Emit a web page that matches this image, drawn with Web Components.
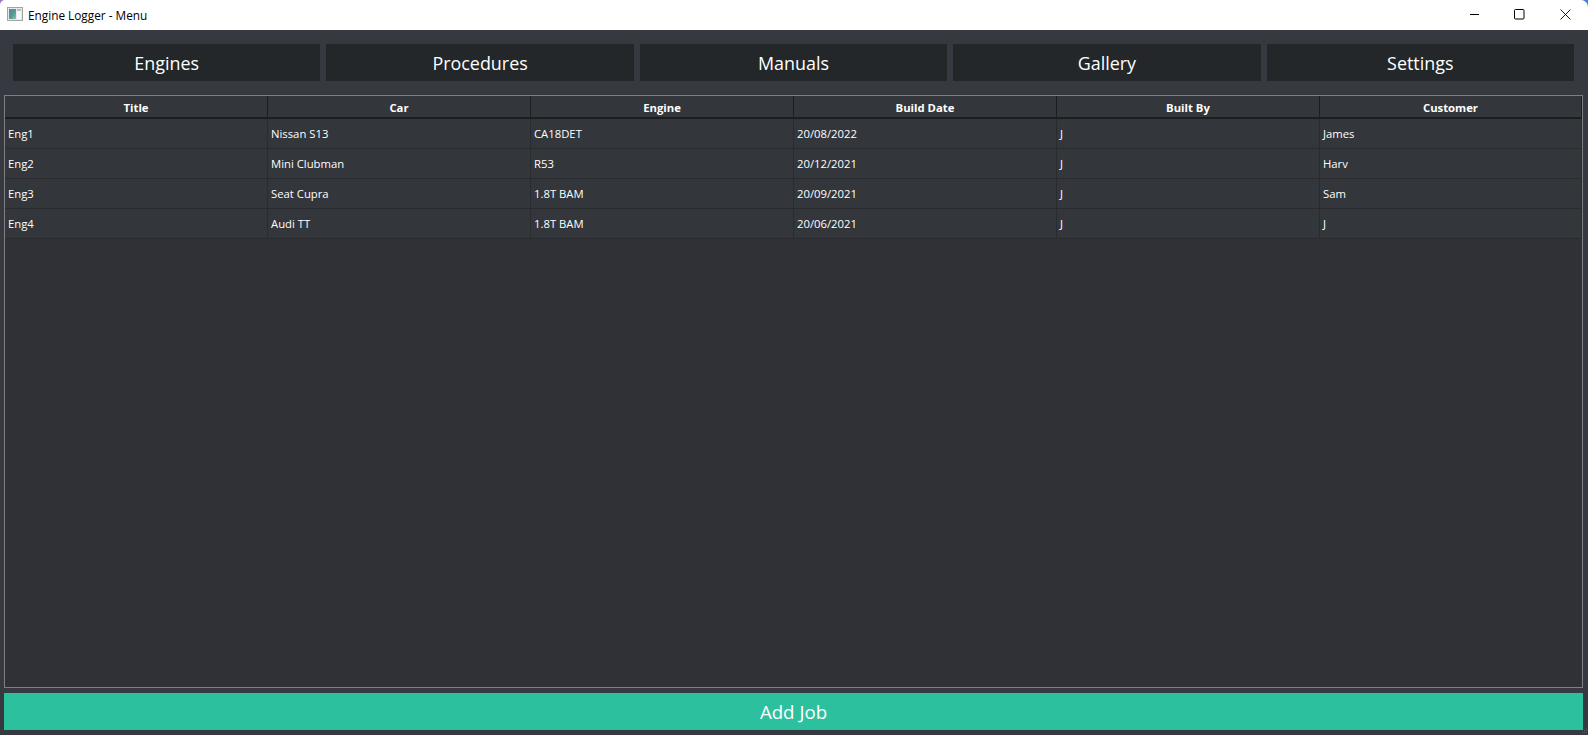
<!DOCTYPE html>
<html>
<head>
<meta charset="utf-8">
<title>Engine Logger - Menu</title>
<style>
  html, body { margin: 0; padding: 0; height: 100%; background: #36393f; overflow: hidden; }
  body { font-family: "Open Sans", "Noto Sans", sans-serif; }
</style>
</head>
<body>
<app-window>
  <title-bar slot="title">Engine Logger - Menu</title-bar>
  <menu-bar slot="menu">
    <menu-button>Engines</menu-button>
    <menu-button>Procedures</menu-button>
    <menu-button>Manuals</menu-button>
    <menu-button>Gallery</menu-button>
    <menu-button>Settings</menu-button>
  </menu-bar>
  <job-table slot="table"></job-table>
  <add-button slot="action">Add Job</add-button>
</app-window>

<script>
class AppWindow extends HTMLElement {
  constructor() {
    super();
    this.attachShadow({ mode: "open" });
    this.shadowRoot.innerHTML = `
      <style>
        :host { display: flex; flex-direction: column; height: 735px; background: #36393f; position: relative; }
        .table { flex: 1; min-height: 0; display: flex; padding: 0 5px 0 4px; }
        .action { display: block; padding: 5px 5px 5px 4px; }
        .grip { position: absolute; right: 0; bottom: 0; width: 8px; height: 8px; }
      </style>
      <slot name="title"></slot>
      <slot name="menu"></slot>
      <div class="table"><slot name="table"></slot></div>
      <div class="action"><slot name="action"></slot></div>
      <svg class="grip" viewBox="0 0 8 8" fill="#55585e">
        <rect x="6" y="1" width="1" height="1"/>
        <rect x="4" y="3" width="1" height="1"/><rect x="6" y="3" width="1" height="1"/>
        <rect x="2" y="5" width="1" height="1"/><rect x="4" y="5" width="1" height="1"/><rect x="6" y="5" width="1" height="1"/>
      </svg>
    `;
  }
}

class TitleBar extends HTMLElement {
  constructor() {
    super();
    this.attachShadow({ mode: "open" });
    this.shadowRoot.innerHTML = `
      <style>
        /* the gradient only shows through the rounded window corners */
        :host { display: block; flex: none; height: 30px; background: linear-gradient(90deg, #8d7fb8 0, #8d7fb8 50%, #3f7fd6 50%, #3f7fd6 100%); }
        .bar { display: flex; align-items: flex-start; height: 30px; background: #fff; color: #000; font: 11.8px "Open Sans", sans-serif; border-radius: 5px 7px 0 0; }
        .icon { width: 16px; height: 14px; margin: 7px 5px 0 7px; flex: none; }
        .text { flex: 1; line-height: 30px; }
        .ctrl { width: 45px; height: 30px; flex: none; display: flex; justify-content: center; padding-top: 9px; box-sizing: border-box; }
        .ctrl.close { width: 46px; }
        .ctrl svg { width: 11px; height: 11px; }
      </style>
      <div class="bar">
        <svg class="icon" viewBox="0 0 16 14">
          <defs>
            <linearGradient id="pane" x1="0" y1="0" x2="1" y2="1">
              <stop offset="0" stop-color="#5d86a8"/>
              <stop offset="0.55" stop-color="#4f9d92"/>
              <stop offset="1" stop-color="#8fc4a6"/>
            </linearGradient>
          </defs>
          <rect x="0.5" y="0.5" width="15" height="13" fill="#e8eaea" stroke="#a0a4a5"/>
          <rect x="2" y="2" width="7" height="10" fill="url(#pane)"/>
          <rect x="10" y="2" width="4" height="2" fill="#b9bdbe"/>
          <rect x="10" y="4" width="4" height="8" fill="#f7f8f8"/>
        </svg>
        <span class="text"><slot></slot></span>
        <span class="ctrl"><svg viewBox="0 0 11 11"><path d="M1 5.5H10" stroke="#000" fill="none"/></svg></span>
        <span class="ctrl"><svg viewBox="0 0 11 11"><rect x="0.5" y="0.5" width="9.5" height="9.5" rx="1" stroke="#000" fill="none"/></svg></span>
        <span class="ctrl close"><svg viewBox="0 0 11 11"><path d="M0.5 0.5L10.5 10.5M10.5 0.5L0.5 10.5" stroke="#000" stroke-width="0.9" fill="none"/></svg></span>
      </div>
    `;
  }
}

class MenuBar extends HTMLElement {
  constructor() {
    super();
    this.attachShadow({ mode: "open" });
    this.shadowRoot.innerHTML = `
      <style>
        :host { display: grid; grid-template-columns: repeat(5, 1fr); gap: 6px; padding: 14px 14px 14px 13px; flex: none; }
      </style>
      <slot></slot>
    `;
  }
}

class MenuButton extends HTMLElement {
  constructor() {
    super();
    this.attachShadow({ mode: "open" });
    this.shadowRoot.innerHTML = `
      <style>
        :host { display: flex; align-items: center; justify-content: center; height: 37px; background: #23272a; color: #fff; font: 17.9px "Open Sans", sans-serif; }
      </style>
      <slot></slot>
    `;
  }
}

class AddButton extends HTMLElement {
  constructor() {
    super();
    this.attachShadow({ mode: "open" });
    this.shadowRoot.innerHTML = `
      <style>
        :host { display: flex; align-items: center; justify-content: center; height: 37px; background: #2cc09f; color: #fff; font: 18.7px "Open Sans", sans-serif; }
      </style>
      <slot></slot>
    `;
  }
}

const columns = ["Title", "Car", "Engine", "Build Date", "Built By", "Customer"];
const jobs = [
  ["Eng1", "Nissan S13", "CA18DET", "20/08/2022", "J", "James"],
  ["Eng2", "Mini Clubman", "R53", "20/12/2021", "J", "Harv"],
  ["Eng3", "Seat Cupra", "1.8T BAM", "20/09/2021", "J", "Sam"],
  ["Eng4", "Audi TT", "1.8T BAM", "20/06/2021", "J", "J"]
];

class JobTable extends HTMLElement {
  constructor() {
    super();
    this.attachShadow({ mode: "open" });
    const head = columns.map(c => `<div class="th">${c}</div>`).join("");
    const rows = jobs.map(r => r.map(c => `<div class="td">${c}</div>`).join("")).join("");
    this.shadowRoot.innerHTML = `
      <style>
        :host { display: block; flex: 1; border: 1px solid #7d7f83; background: #2f3136; color: #fff; font: 11.3px "Open Sans", sans-serif; }
        .grid { display: grid; grid-template-columns: repeat(5, 263px) 1fr; grid-template-rows: 23px; grid-auto-rows: 30px; }
        .th { display: flex; align-items: center; justify-content: center; font-weight: 700; background: #33363b; border-right: 1px solid #1b1d20; border-bottom: 2px solid #1b1d20; box-sizing: border-box; padding-top: 1px; }
        .td { display: flex; align-items: center; padding-left: 3px; box-sizing: border-box; background: #33363b; border-right: 1px solid #292b2f; border-bottom: 1px solid #292b2f; }
      </style>
      <div class="grid">${head}${rows}</div>
    `;
  }
}

customElements.define("app-window", AppWindow);
customElements.define("title-bar", TitleBar);
customElements.define("menu-bar", MenuBar);
customElements.define("menu-button", MenuButton);
customElements.define("add-button", AddButton);
customElements.define("job-table", JobTable);
</script>
</body>
</html>
